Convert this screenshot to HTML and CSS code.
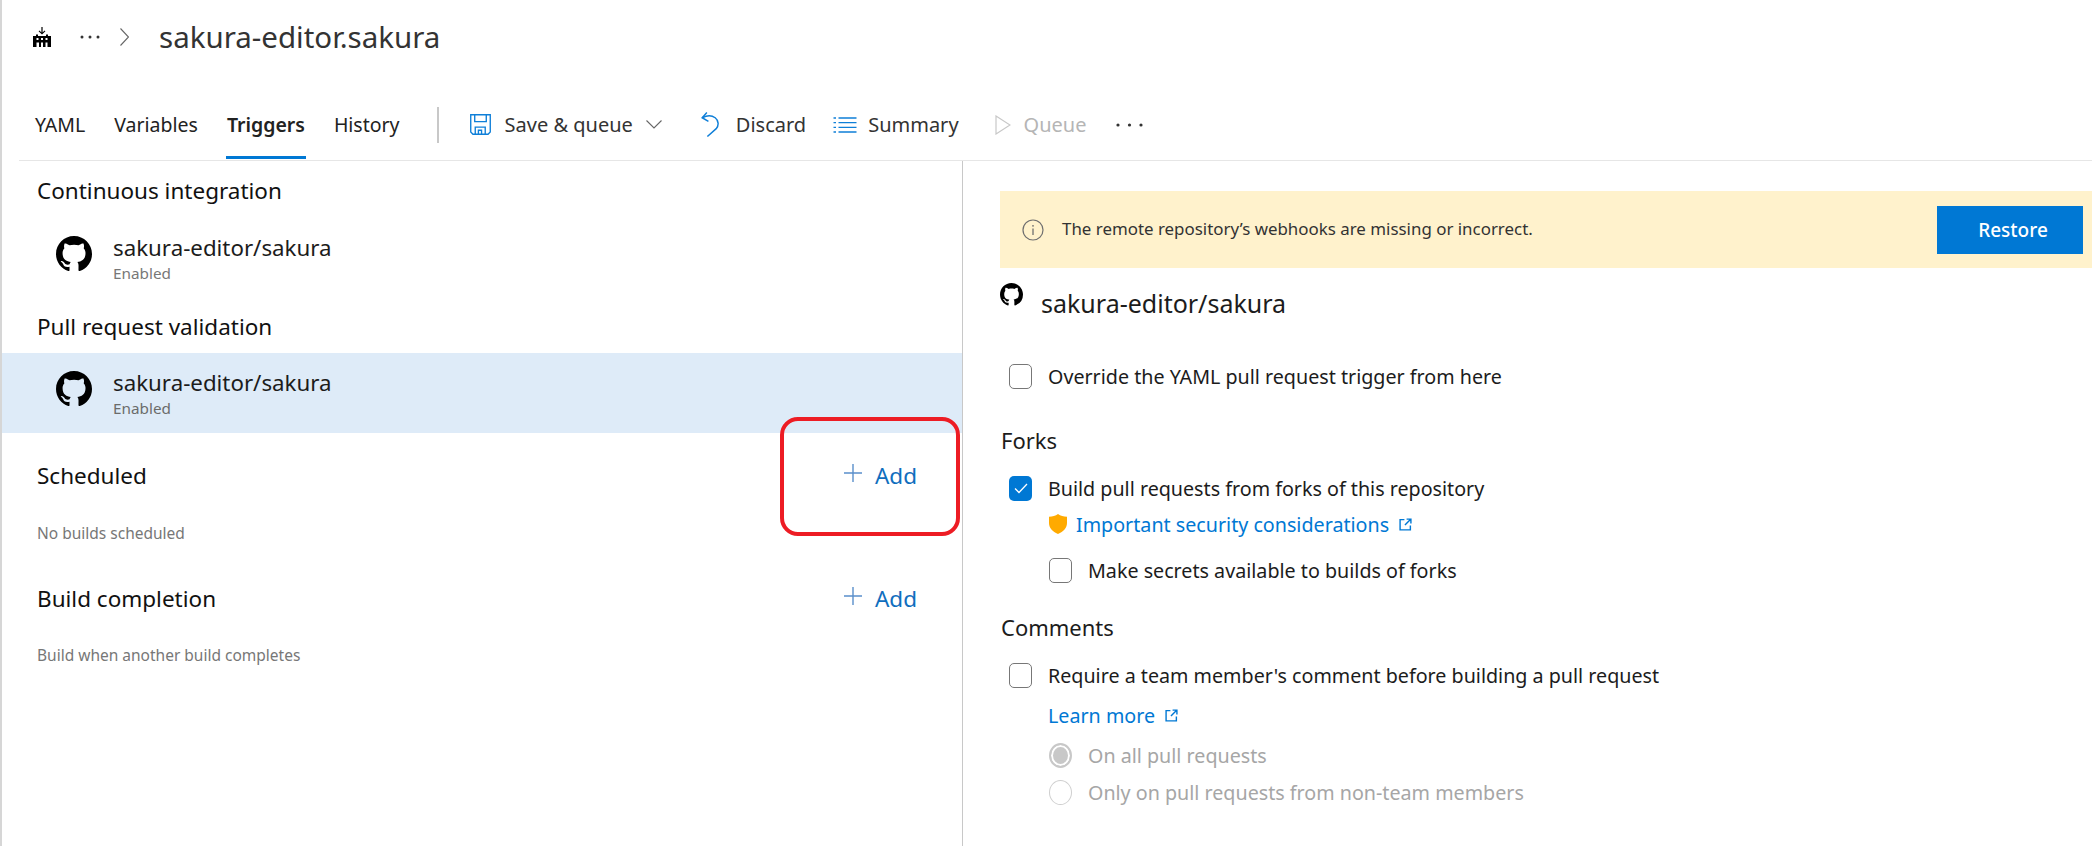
FILE: index.html
```html
<!DOCTYPE html>
<html lang="en">
<head>
  <meta charset="UTF-8" />
  <title>sakura-editor.sakura - Triggers</title>
  <link rel="stylesheet" href="styles.css">
</head>
<body>
  <svg class="defs" width="0" height="0">
    <symbol id="gh" viewBox="0 0 16 16">
      <path d="M8 0C3.58 0 0 3.58 0 8c0 3.54 2.29 6.53 5.47 7.59.4.07.55-.17.55-.38 0-.19-.01-.82-.01-1.49-2.01.37-2.53-.49-2.69-.94-.09-.23-.48-.94-.82-1.13-.28-.15-.68-.52-.01-.53.63-.01 1.08.58 1.23.82.72 1.21 1.87.87 2.33.66.07-.52.28-.87.51-1.07-1.78-.2-3.64-.89-3.64-3.95 0-.87.31-1.59.82-2.15-.08-.2-.36-1.02.08-2.12 0 0 .67-.21 2.2.82.64-.18 1.32-.27 2-.27.68 0 1.36.09 2 .27 1.53-1.04 2.2-.82 2.2-.82.44 1.1.16 1.92.08 2.12.51.56.82 1.27.82 2.15 0 3.07-1.87 3.75-3.65 3.95.29.25.54.73.54 1.48 0 1.07-.01 1.93-.01 2.2 0 .21.15.46.55.38A8.013 8.013 0 0016 8c0-4.42-3.58-8-8-8z"/>
    </symbol>
    <symbol id="ext" viewBox="0 0 12 12">
      <path d="M5 1.500H1v9.500h9.500V7M7 1h4v4M11 1L5.500 6.500" fill="none" stroke="#0078d4" stroke-width="1.300"/>
    </symbol>
    <symbol id="plus" viewBox="0 0 18 18">
      <path d="M9 0v18M0 9h18" stroke="#5a8fcb" stroke-width="1.400"/>
    </symbol>
  </svg>

  <div class="page">
    <header class="crumbs">
      <svg class="build-icon" width="18" height="20" viewBox="0 0 18 20">
        <path d="M8.400 0h1.200v5.400l2-2 .8.8L9 7.600 5.600 4.200l.8-.8 2 2z"/>
        <path fill-rule="evenodd" d="M0 9h3V7.500h2V9h8V7.500h2V9h3v11H0zM3.500 11v2h2v-2zm4.500 0v2h2v-2zm4.500 0v2h2v-2zM3.500 15.500V20h2.500v-4.500zm4.500 0V20h2v-4.500zm4.500 0V20h2v-4.500z"/>
      </svg>
      <svg class="more" width="20" height="4" viewBox="0 0 20 4">
        <circle cx="2" cy="2" r="1.500"/><circle cx="10" cy="2" r="1.500"/><circle cx="18" cy="2" r="1.500"/>
      </svg>
      <svg class="crumb-sep" width="9" height="18" viewBox="0 0 9 18">
        <path d="M.5.5L8.500 9 .5 17.500" fill="none" stroke="#666" stroke-width="1.100"/>
      </svg>
      <h1 class="title">sakura-editor.sakura</h1>
    </header>

    <nav class="toolbar">
      <a class="tab">YAML</a>
      <a class="tab">Variables</a>
      <a class="tab active">Triggers</a>
      <a class="tab">History</a>
      <span class="bar-divider"></span>
      <button class="tool tool-save">
        <svg width="21" height="21" viewBox="0 0 20 20" fill="none" stroke="#0f7fd8" stroke-width="1.300">
          <path d="M.7.7h18.600v16.500l-2.100 2.100H2.800L.7 17.200z"/>
          <path d="M4.500.7v6.500h11V.7M5 19.300v-6.800h9.500v6.800M8 19v-3.500h3V19"/>
        </svg>
        <span>Save &amp; queue</span>
        <svg class="caret" width="16" height="9" viewBox="0 0 16 9">
          <path d="M.5.5L8 8 15.500.5" fill="none" stroke="#666" stroke-width="1.100"/>
        </svg>
      </button>
      <button class="tool tool-discard">
        <svg width="19" height="25" viewBox="0 0 18 24" fill="none" stroke="#0f7fd8" stroke-width="1.400">
          <path d="M5.500.5L1 5.500l6 3.500"/>
          <path d="M1.500 5.300C5 3.500 10 3 13.500 5.500c3.500 2.700 3.600 7.500 1 10.500L6 23.500"/>
        </svg>
        <span>Discard</span>
      </button>
      <button class="tool tool-summary">
        <svg width="24" height="16" viewBox="0 0 23 16" stroke="#0f7fd8" stroke-width="1.300">
          <path d="M5 1h18M5 5.700h18M5 10.300h18M5 15h18"/>
          <path d="M0 1h2.500M0 5.700h2.500M0 10.300h2.500M0 15h2.500"/>
        </svg>
        <span>Summary</span>
      </button>
      <button class="tool tool-queue" disabled>
        <svg width="16" height="20" viewBox="0 0 16 20">
          <path d="M1 1v18l14-9z" fill="none" stroke="#c8c8c8" stroke-width="1.200"/>
        </svg>
        <span>Queue</span>
      </button>
      <svg class="more more-tools" width="27" height="4" viewBox="0 0 27 4">
        <circle cx="2" cy="2" r="1.600"/><circle cx="13.500" cy="2" r="1.600"/><circle cx="25" cy="2" r="1.600"/>
      </svg>
    </nav>

    <main class="panes">
      <section class="triggers">
        <h2 class="group-head first">Continuous integration</h2>
        <div class="repo-row">
          <svg class="gh-icon"><use href="#gh"/></svg>
          <div class="repo-text">
            <div class="repo-name">sakura-editor/sakura</div>
            <div class="repo-state">Enabled</div>
          </div>
        </div>

        <h2 class="group-head second">Pull request validation</h2>
        <div class="repo-row selected">
          <svg class="gh-icon"><use href="#gh"/></svg>
          <div class="repo-text">
            <div class="repo-name">sakura-editor/sakura</div>
            <div class="repo-state">Enabled</div>
          </div>
        </div>

        <div class="group-head with-add third">
          <h2>Scheduled</h2>
          <a class="add-link"><svg width="18" height="18"><use href="#plus"/></svg>Add</a>
        </div>
        <p class="group-note">No builds scheduled</p>

        <div class="group-head with-add fourth">
          <h2>Build completion</h2>
          <a class="add-link"><svg width="18" height="18"><use href="#plus"/></svg>Add</a>
        </div>
        <p class="group-note">Build when another build completes</p>

        <div class="callout"></div>
      </section>

      <section class="details">
        <div class="banner">
          <svg class="info-icon" width="22" height="22" viewBox="0 0 22 22">
            <circle cx="11" cy="11" r="10" fill="none" stroke="#6f6f6f" stroke-width="1.200"/>
            <path d="M11 9.500V16" stroke="#6f6f6f" stroke-width="1.300"/>
            <circle cx="11" cy="6.800" r="0.900" fill="#6f6f6f"/>
          </svg>
          <span class="banner-text">The remote repository’s webhooks are missing or incorrect.</span>
          <button class="restore">Restore</button>
        </div>

        <div class="repo-title">
          <svg class="gh-small"><use href="#gh"/></svg>
          <span>sakura-editor/sakura</span>
        </div>

        <label class="check override"><span class="box"></span>Override the YAML pull request trigger from here</label>

        <h3 class="sub-head forks">Forks</h3>
        <label class="check">
          <span class="box on">
            <svg width="14" height="11" viewBox="0 0 14 11"><path d="M1 5.500L5 9.500 13 1" fill="none" stroke="#fff" stroke-width="1.300"/></svg>
          </span>Build pull requests from forks of this repository
        </label>
        <div class="link-line security">
          <svg class="shield" width="18" height="20" viewBox="0 0 18 20">
            <path d="M9 0c2.500 1.800 5.500 2.600 9 2.800V9c0 5-3.500 8.700-9 11-5.500-2.300-9-6-9-11V2.800C3.500 2.600 6.500 1.800 9 0z" fill="#ffaa00"/>
          </svg>
          <a class="link">Important security considerations</a>
          <svg class="ext-icon"><use href="#ext"/></svg>
        </div>
        <label class="check nested"><span class="box"></span>Make secrets available to builds of forks</label>

        <h3 class="sub-head comments">Comments</h3>
        <label class="check"><span class="box"></span>Require a team member's comment before building a pull request</label>
        <div class="link-line learn">
          <a class="link">Learn more</a>
          <svg class="ext-icon"><use href="#ext"/></svg>
        </div>
        <label class="radio first-radio"><span class="dot on"></span>On all pull requests</label>
        <label class="radio"><span class="dot"></span>Only on pull requests from non-team members</label>
      </section>
    </main>
  </div>
</body>
</html>
```

FILE: styles.css
```css
* {
  box-sizing: border-box;
}
body {
  margin: 0;
  font-family: "Noto Sans", "Open Sans", sans-serif;
  color: #1c1c1c;
  background: white;
}
.defs {
  position: absolute;
}
.page {
  height: 846px;
  border-left: 2px solid #d6d6d6;
  overflow: hidden;
}

/* header */
.crumbs {
  display: flex;
  align-items: center;
  height: 73px;
  padding-left: 31px;
}
.build-icon {
  margin-right: 29px;
}
.more {
  fill: #333;
}
.crumb-sep {
  margin: 0 30px 0 20px;
}
.title {
  margin: 0;
  font-size: 29.5px;
  font-weight: 400;
  color: #333;
  white-space: nowrap;
}

/* tabs and tools */
.toolbar {
  display: flex;
  align-items: center;
  height: 88px;
  margin-left: 17px;
  padding: 16px 0 0 16px;
  border-bottom: 1px solid #e6e6e6;
  font-size: 20px;
}
.tab {
  position: relative;
  margin-right: 29px;
  font-size: 19.5px;
  color: #222;
}
.tab.active {
  font-weight: 600;
}
.tab.active::after {
  content: "";
  position: absolute;
  left: -1px;
  right: -1px;
  bottom: -21px;
  height: 3px;
  background: #0078d4;
}
.bar-divider {
  width: 2px;
  height: 36px;
  margin: 0 31px 0 8px;
  background: #c8c8c8;
}
.tool {
  display: flex;
  align-items: center;
  padding: 0;
  border: none;
  background: none;
  font: inherit;
  color: #333;
}
.tool-save svg:first-child {
  margin-right: 14px;
}
.caret {
  margin-left: 13px;
}
.tool-save {
  margin-right: 39px;
}
.tool-discard svg {
  margin-right: 16px;
}
.tool-discard {
  margin-right: 27px;
}
.tool-summary svg {
  margin-right: 11px;
}
.tool-summary {
  margin-right: 36px;
}
.tool-queue {
  color: #b5b5b5;
}
.tool-queue svg {
  margin-right: 13px;
}
.more-tools {
  margin-left: 30px;
}

/* panes */
.panes {
  display: grid;
  grid-template-columns: 961px 1fr;
  height: 685px;
}
.triggers {
  position: relative;
  border-right: 1px solid #c8c8c8;
}
.group-head {
  margin: 0;
  padding-left: 35px;
  font-size: 22.5px;
  font-weight: 400;
  line-height: 32px;
  color: #111;
}
.group-head h2 {
  margin: 0;
  font: inherit;
}
.first {
  margin: 14px 0 11px;
}
.second {
  margin: 13px 0 10px;
}
.third {
  margin: 27px 0 31px;
}
.fourth {
  margin: 40px 0 30px;
}
.with-add {
  display: flex;
  justify-content: space-between;
  align-items: center;
  padding-right: 45px;
}
.add-link {
  display: flex;
  align-items: center;
  gap: 13px;
  color: #106ebe;
  font-size: 22.5px;
}
.add-link svg {
  margin-top: -6px;
}
.repo-row {
  display: flex;
  align-items: center;
  height: 80px;
  padding-left: 54px;
}
.repo-row.selected {
  background: #deebf8;
}
.gh-icon {
  width: 36px;
  height: 36px;
  margin: -8px 21px 0 0;
}
.repo-text {
  padding-top: 2px;
}
.repo-name {
  font-size: 22.3px;
  line-height: 28px;
}
.repo-state {
  font-size: 15.3px;
  line-height: 22px;
  color: #777;
}
.selected .repo-state {
  color: #6b6b6b;
}
.group-note {
  margin: 0;
  padding-left: 35px;
  font-size: 15.5px;
  line-height: 20px;
  color: #777;
}
.callout {
  position: absolute;
  left: 778px;
  top: 256px;
  width: 180px;
  height: 119px;
  border: 4px solid #ed1c24;
  border-radius: 18px;
}

/* details */
.details {
  padding-left: 37px;
  font-size: 19.7px;
}
.banner {
  display: flex;
  align-items: center;
  height: 77px;
  margin-top: 30px;
  padding: 0 9px 0 22px;
  background: #fff2cc;
}
.info-icon {
  margin-right: 18px;
}
.banner-text {
  flex: 1;
  margin-top: -3px;
  font-size: 16.9px;
  color: #333;
}
.restore {
  width: 146px;
  height: 48px;
  padding-left: 12px;
  border: none;
  background: #0078d4;
  color: white;
  font: inherit;
  font-size: 19px;
  font-weight: 500;
}
.repo-title {
  display: flex;
  height: 44px;
  margin-top: 14px;
  font-size: 25px;
  line-height: 42px;
}
.gh-small {
  width: 23px;
  height: 23px;
  margin: 1px 18px 0 0;
}
.check,
.radio {
  display: flex;
  align-items: center;
  height: 24px;
  padding-left: 9px;
  white-space: nowrap;
}
.override {
  margin-top: 38px;
}
.box {
  display: flex;
  flex-shrink: 0;
  align-items: center;
  justify-content: center;
  width: 23px;
  height: 25px;
  margin-right: 16px;
  border: 1px solid #777;
  border-radius: 5px;
  background: white;
}
.box.on {
  border: none;
  background: #0078d4;
}
.sub-head {
  margin: 0;
  padding-left: 1px;
  font-size: 22px;
  font-weight: 400;
  line-height: 28px;
}
.forks {
  margin: 38px 0 22px;
}
.comments {
  margin: 31px 0 22px;
}
.link-line {
  display: flex;
  align-items: center;
  height: 26px;
}
.link {
  color: #0078d4;
}
.ext-icon {
  width: 13px;
  height: 13px;
  margin-left: 10px;
}
.security {
  margin-top: 11px;
  padding-left: 49px;
}
.shield {
  margin-right: 9px;
}
.learn {
  margin-top: 15px;
  padding-left: 48px;
}
.nested {
  margin-top: 21px;
  padding-left: 49px;
}
.radio {
  margin-top: 13px;
  padding-left: 49px;
  color: #a6a6a6;
}
.first-radio {
  margin-top: 15px;
}
.dot {
  flex-shrink: 0;
  width: 23px;
  height: 25px;
  margin-right: 16px;
  border: 1px solid #cfcfcf;
  border-radius: 50%;
}
.dot.on {
  border: 2px solid #c8c8c8;
  background: #c8c8c8;
  box-shadow: inset 0 0 0 2px white;
}
```
